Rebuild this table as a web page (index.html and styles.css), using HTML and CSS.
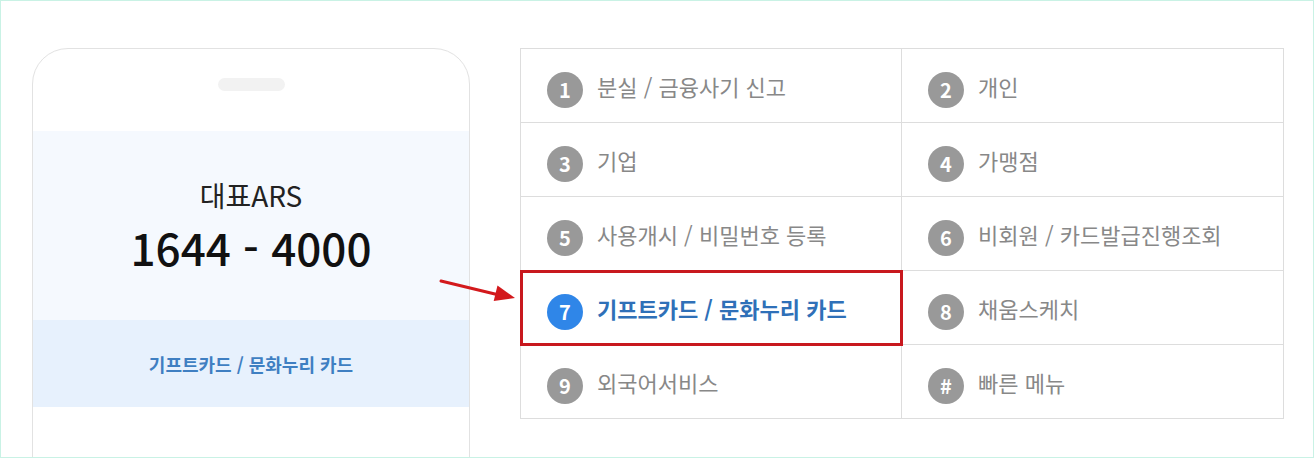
FILE: index.html
```html
<!DOCTYPE html>
<html lang="ko">
<head>
<meta charset="utf-8">
<title>ARS 안내</title>
<link rel="stylesheet" href="styles.css">
</head>
<body>
<div class="page">
  <div class="phone">
    <div class="notch"></div>
    <div class="screen">
      <div class="ars-label">대표ARS</div>
      <div class="ars-number">1644 - 4000</div>
    </div>
    <div class="screen-menu">기프트카드 / 문화누리 카드</div>
  </div>

  <svg class="arrow" width="80" height="30" viewBox="0 0 80 30" aria-hidden="true">
    <line x1="2" y1="3" x2="58" y2="16.5" stroke="#d3191c" stroke-width="3" stroke-linecap="round"/>
    <polygon points="76,20 58.5,7.5 54.7,23" fill="#d3191c"/>
  </svg>

  <ul class="menu">
    <li class="item"><span class="num">1</span><span class="label">분실 / 금융사기 신고</span></li>
    <li class="item"><span class="num">2</span><span class="label">개인</span></li>
    <li class="item"><span class="num">3</span><span class="label">기업</span></li>
    <li class="item"><span class="num">4</span><span class="label">가맹점</span></li>
    <li class="item"><span class="num">5</span><span class="label">사용개시 / 비밀번호 등록</span></li>
    <li class="item"><span class="num">6</span><span class="label">비회원 / 카드발급진행조회</span></li>
    <li class="item active"><span class="num">7</span><span class="label">기프트카드 / 문화누리 카드</span></li>
    <li class="item"><span class="num">8</span><span class="label">채움스케치</span></li>
    <li class="item"><span class="num">9</span><span class="label">외국어서비스</span></li>
    <li class="item"><span class="num">#</span><span class="label">빠른 메뉴</span></li>
  </ul>
</div>
</body>
</html>
```

FILE: styles.css
```css
* { box-sizing: border-box; }

html, body {
  margin: 0;
  padding: 0;
  background: #ffffff;
}

body {
  font-family: "Noto Sans CJK KR", "Noto Sans", sans-serif;
}

.page {
  position: relative;
  width: 1314px;
  height: 458px;
  border: 1px solid #c9f2e5;
  overflow: hidden;
  display: flex;
  align-items: flex-start;
  gap: 50px;
  padding: 47px 0 0 31px;
}

.phone {
  flex: none;
  width: 438px;
  height: 520px;
  border: 1px solid #e2e2e2;
  border-radius: 36px;
  background: #ffffff;
  display: flex;
  flex-direction: column;
  align-items: center;
}

.notch {
  width: 67px;
  height: 13px;
  margin-top: 29px;
  border-radius: 7px;
  background: #f2f2f2;
}

.screen {
  width: 100%;
  height: 189px;
  margin-top: 40px;
  background: #f5f9fe;
  display: flex;
  flex-direction: column;
  align-items: center;
  padding-top: 47px;
  gap: 10px;
}

.ars-label {
  font-size: 28px;
  line-height: 34px;
  color: #222222;
}

.ars-number {
  font-size: 44px;
  line-height: 50px;
  font-weight: 500;
  color: #111111;
}

.screen-menu {
  width: 100%;
  height: 87px;
  background: #e7f1fd;
  display: flex;
  align-items: center;
  justify-content: center;
  font-size: 18px;
  font-weight: 700;
  color: #3f7fc2;
}

.arrow {
  position: absolute;
  left: 438px;
  top: 277px;
}

.menu {
  flex: none;
  list-style: none;
  margin: 0;
  padding: 0;
  width: 764px;
  display: grid;
  grid-template-columns: 381px 382px;
  grid-auto-rows: 74px;
  border-top: 1px solid #dddddd;
  border-left: 1px solid #dddddd;
}

.item {
  position: relative;
  display: flex;
  align-items: center;
  gap: 14px;
  padding-left: 26px;
  border-right: 1px solid #dddddd;
  border-bottom: 1px solid #dddddd;
}

.num {
  flex: none;
  width: 36px;
  height: 36px;
  margin-top: 8px;
  border-radius: 50%;
  background: #999999;
  color: #ffffff;
  font-size: 20px;
  font-weight: 700;
  display: flex;
  align-items: center;
  justify-content: center;
}

.label {
  font-size: 22px;
  color: #888888;
  white-space: nowrap;
}

.item.active {
  outline: 3px solid #c8181e;
  outline-offset: -2px;
  z-index: 1;
}

.item.active .num {
  background: #2f86e8;
}

.item.active .label {
  font-weight: 700;
  color: #2f70b8;
}
```
